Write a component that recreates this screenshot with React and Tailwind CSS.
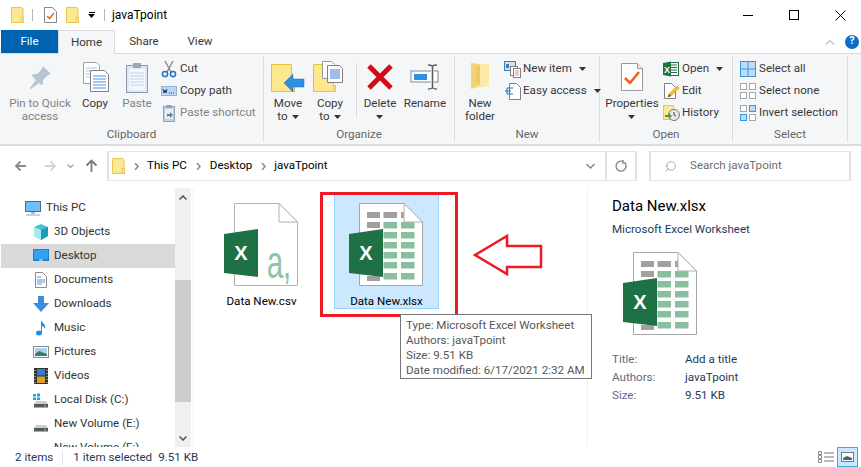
import { Search } from "lucide-react";

const Svg = ({ w = 16, h = 16, children, className = "" }) => (
  <svg width={w} height={h} viewBox={`0 0 ${w} ${h}`} className={`block shrink-0 ${className}`}>
    {children}
  </svg>
);

const Caret = ({ alone }) => (
  <svg width="7" height="4" viewBox="0 0 7 4" className={`inline-block align-middle ${alone ? "" : "ml-1"}`}>
    <path d="M0 0h7L3.5 4z" fill="#333" />
  </svg>
);

/* ---------- small folder used in title bar + address bar ---------- */
const SmallFolder = () => (
  <Svg w={13} h={16}>
    <path d="M.5.5h10l1.500 1v14H.5z" fill="#fce890" stroke="#eac54f" />
    <path d="M10 10.500h2.500v5H10z" fill="#fce890" stroke="#eac54f" />
  </Svg>
);

/* ---------- ribbon icons ---------- */
const PinIcon = () => (
  <Svg w={32} h={32}>
    <path d="M19 5l8 8-3 1-5 5 0 4-2 1-9-9 1-2 4 0 5-5z" fill="#b8c4d4" />
    <path d="M12 19l-6 8 1 1 8-6z" fill="#b8c4d4" />
  </Svg>
);

const CopyIcon = () => (
  <Svg w={32} h={32}>
    <path d="M4.500 1.500h13l3 3v18h-16z" fill="#fff" stroke="#a0a0a0" />
    <path d="M7 7h11M7 10h11M7 13h11M7 16h11" stroke="#a9c3e8" />
    <path d="M11.500 9.500h14l4 4v17h-18z" fill="#fff" stroke="#808080" />
    <path d="M14 15h13M14 18h13M14 21h13M14 24h13M14 27h13" stroke="#4f8fe6" />
  </Svg>
);

const PasteIcon = () => (
  <Svg w={32} h={32}>
    <rect x="5.500" y="4.500" width="21" height="27" fill="#dfe8f3" stroke="#8a99ab" />
    <rect x="8" y="8" width="16" height="21" fill="#f4f7fb" />
    <path d="M9 12h14M9 15h14M9 18h14M9 21h14M9 24h14" stroke="#bfd2ea" />
    <rect x="12" y="2" width="8" height="5" fill="#9aa7b8" />
  </Svg>
);

const CutIcon = () => (
  <Svg w={16} h={18}>
    <path d="M4 1l6 11M12 1L6 12" stroke="#8a8f96" strokeWidth="1.500" />
    <circle cx="4" cy="14" r="2.600" fill="none" stroke="#1f74c9" strokeWidth="1.500" />
    <circle cx="12" cy="14" r="2.600" fill="none" stroke="#1f74c9" strokeWidth="1.500" />
  </Svg>
);

const CopyPathIcon = () => (
  <Svg w={16} h={16}>
    <rect x=".5" y="3.500" width="15" height="9" fill="#b8d8f4" stroke="#8fb4d6" />
    <path d="M2 6l1 4 1-3 1 3 1-4" stroke="#24405e" fill="none" />
    <path d="M8 10h1M10 10h1M12 10h1" stroke="#24405e" />
  </Svg>
);

const ShortcutIcon = () => (
  <Svg w={16} h={18}>
    <rect x="2.500" y="2.500" width="11" height="15" fill="#bcd0e6" stroke="#8fa2b6" />
    <rect x="4" y="5" width="8" height="10" fill="#e6eef6" />
    <path d="M6 13v-3h3V8l3 3-3 3v-2H7z" fill="#6b7d92" />
    <rect x="5.500" y="1" width="5" height="3" fill="#8fa2b6" />
  </Svg>
);

const MoveToIcon = () => (
  <Svg w={36} h={32}>
    <path d="M1.500 3.500h20v27h-20z" fill="#fde88e" stroke="#e9bf3e" />
    <path d="M21.500 24.500h3v6h-3" fill="#fde88e" stroke="#e9bf3e" />
    <path d="M14 22l9-9v5h11v8H23v5z" fill="#2f8fe0" stroke="#1b6db5" strokeWidth=".5" />
  </Svg>
);

const CopyToIcon = () => (
  <Svg w={36} h={32}>
    <path d="M1.500 3.500h20v27h-20z" fill="#fde88e" stroke="#e9bf3e" />
    <path d="M21.500 24.500h2v6h-2" fill="#fde88e" stroke="#e9bf3e" />
    <path d="M10.500.5h9l3 3v14h-12z" fill="#fff" stroke="#999" />
    <path d="M15.500 4.500h12l3 3v14h-15z" fill="#fff" stroke="#808080" />
    <path d="M18 9h10M18 11h10M18 13h10M18 15h10M18 17h10" stroke="#3f7fd4" />
  </Svg>
);

const DeleteIcon = () => (
  <Svg w={28} h={28}>
    <path d="M3 3l22 22M25 3L3 25" stroke="#d40a14" strokeWidth="5" />
  </Svg>
);

const RenameIcon = () => (
  <Svg w={30} h={28}>
    <rect x="1" y="8" width="27" height="11" fill="#fff" stroke="#7f8a96" />
    <rect x="4" y="11" width="13" height="6" fill="#2f8fe0" />
    <rect x="21" y="7" width="3" height="14" fill="#f5f6f7" />
    <path d="M18 2c2 0 3 0 4.500 1C24 2 25 2 27 2M22.500 3v22M18 26c2 0 3 0 4.500-1 1.500 1 2.500 1 4.500 1" stroke="#5c5c5c" strokeWidth="1.500" fill="none" />
  </Svg>
);

const NewFolderIcon = () => (
  <Svg w={20} h={30}>
    <path d="M1 1l10 1 8 0 0 22-10 1-8 2z" fill="#f8dd83" />
    <path d="M10 2h9v22H10z" fill="#fbe9a6" />
    <path d="M1 1l9 2v19l-9 5z" fill="#f4d274" />
    <path d="M6 4h4v18H6z" fill="#efc961" />
  </Svg>
);

const NewItemIcon = () => (
  <Svg w={17} h={17}>
    <rect x=".5" y=".5" width="11" height="9" fill="#cfe2f3" stroke="#3f7fb5" />
    <rect x="2" y="3" width="3" height="4" fill="#3f7fb5" />
    <rect x="6.500" y="5.500" width="7" height="9" fill="#fff" stroke="#808080" />
    <rect x="9.500" y="7.500" width="7" height="9" fill="#fff" stroke="#808080" />
    <path d="M11 10h4M11 12h4M11 14h4" stroke="#e09a80" />
  </Svg>
);

const EasyAccessIcon = () => (
  <Svg w={17} h={17}>
    <path d="M5.500.5h7l4 4v12h-11z" fill="#fff" stroke="#808080" />
    <path d="M3 5h6M1 8h6M3 11h6" stroke="#1f74c9" strokeWidth="1.200" />
    <path d="M3 5v6" stroke="#1f74c9" />
  </Svg>
);

const PropertiesIcon = () => (
  <Svg w={24} h={30}>
    <path d="M1.500 1.500h16l5 5v22h-21z" fill="#fff" stroke="#9a9a9a" />
    <path d="M17.500 1.500v5h5" fill="#eee" stroke="#9a9a9a" />
    <path d="M5 16l5 5 9-11" fill="none" stroke="#e8601c" strokeWidth="2.500" />
  </Svg>
);

const ExcelSmall = () => (
  <Svg w={16} h={16}>
    <rect x="6.500" y="1.500" width="9" height="13" fill="#fff" stroke="#1e7145" />
    <path d="M8 4h6M8 6.500h6M8 9h6M8 11.500h6" stroke="#1e7145" />
    <path d="M0 2l8-1.500v15L0 14z" fill="#1e7145" />
    <text x="4" y="11.500" textAnchor="middle" fontSize="9" fontWeight="700" fill="#fff" fontFamily="Liberation Sans, sans-serif">X</text>
  </Svg>
);

const EditIcon = () => (
  <Svg w={16} h={16}>
    <path d="M1.500.5h7l4 4v11h-11z" fill="#fff" stroke="#808080" />
    <path d="M5 14l1-3 8-8 2 2-8 8z" fill="#f5c33b" stroke="#b88a1a" strokeWidth=".6" />
    <path d="M5 14l1-3 2 2z" fill="#555" />
  </Svg>
);

const HistoryIcon = () => (
  <Svg w={17} h={16}>
    <path d="M.5.5h10v14H.5z" fill="#fce890" stroke="#eac54f" />
    <circle cx="11" cy="10" r="5.500" fill="#e8e8e8" stroke="#777" />
    <path d="M11 7v3l2 1" stroke="#444" fill="none" />
    <path d="M2 10h4V8l3 3-3 3v-2H2z" fill="#3aa935" />
  </Svg>
);

const GridIcon = ({ cells }) => (
  <Svg w={16} h={16}>
    {[[0, 0], [9, 0], [0, 9], [9, 9]].map(([x, y], i) => (
      <rect
        key={i}
        x={x + 0.5}
        y={y + 0.5}
        width="6"
        height="6"
        fill={cells[i] ? "#bcdcf8" : "#fff"}
        stroke={cells[i] ? "#3a96dd" : "#a6a6a6"}
      />
    ))}
  </Svg>
);

const SelectAllIcon = () => (
  <Svg w={16} h={16}>
    <rect x=".5" y=".5" width="15" height="15" fill="#bcdcf8" stroke="#3a96dd" />
    <path d="M8 0v16M0 8h16" stroke="#3a96dd" />
  </Svg>
);

/* ---------- nav pane icons ---------- */
const PcIcon = () => (
  <Svg>
    <rect x=".5" y="1.500" width="15" height="10" fill="#6cc0f5" stroke="#4a6a86" />
    <path d="M6 12h4v2H6z" fill="#b5bcc4" />
    <path d="M1 15h14" stroke="#9aa4ae" />
  </Svg>
);
const CubeIcon = () => (
  <Svg>
    <path d="M8 0l7 3v9l-7 4-7-4V3z" fill="#3fc4d6" />
    <path d="M1 3l7 3v10l-7-4z" fill="#a7e7ee" />
    <path d="M8 6l7-3v9l-7 4z" fill="#1a9cb8" />
  </Svg>
);
const DesktopIcon = () => (
  <Svg>
    <rect x="0" y="1" width="16" height="12" fill="#1d7fd6" />
    <rect x="1" y="2" width="14" height="9" fill="#33a1f0" />
    <rect x="6" y="11.500" width="4" height="1" fill="#e6f2fc" />
  </Svg>
);
const DocumentsIcon = () => (
  <Svg>
    <path d="M2.500.5h7l4 4v11h-11z" fill="#fff" stroke="#8a8a8a" />
    <path d="M4 5h4M4 8h8M4 10h8M4 12h5" stroke="#5a93d0" />
  </Svg>
);
const DownloadsIcon = () => (
  <Svg>
    <path d="M5 0h6v7h5l-8 9-8-9h5z" fill="#3a8fdd" />
  </Svg>
);
const MusicIcon = () => (
  <Svg>
    <ellipse cx="6" cy="13" rx="3" ry="2.500" fill="#1d8ee8" />
    <path d="M8 13V0c1 3 5 4 4 9-1-2-2-3-3-3v7z" fill="#1d8ee8" />
  </Svg>
);
const PicturesIcon = () => (
  <Svg>
    <rect x=".5" y="2.500" width="15" height="11" fill="#fff" stroke="#8a8a8a" />
    <rect x="2" y="4" width="12" height="8" fill="#a9d4ef" />
    <path d="M2 10l4-3 8 3v2H2z" fill="#3f7a6a" />
  </Svg>
);
const VideosIcon = () => (
  <Svg>
    <rect x="1" y="0" width="14" height="16" fill="#333" />
    <rect x="4" y="1" width="8" height="6.500" fill="#2f7fd0" />
    <rect x="4" y="8.500" width="8" height="6.500" fill="#d8a030" />
    <path d="M2 2v1M2 5v1M2 8v1M2 11v1M2 14v1M14 2v1M14 5v1M14 8v1M14 11v1M14 14v1" stroke="#ddd" />
  </Svg>
);
const DriveBody = () => (
  <>
    <path d="M3 9h10l2 3H1z" fill="#c9ccd0" />
    <rect x="1" y="12" width="14" height="3.500" fill="#55595e" />
    <rect x="11" y="13" width="2" height="1.500" fill="#43d04a" />
  </>
);
const LocalDiskIcon = () => (
  <Svg>
    <DriveBody />
    <path d="M0 2h3v2.500H0zM4 1.500h3V4.500H4zM0 5.500h3V8H0zM4 5.500h3V8H4z" fill="#19a0f0" />
  </Svg>
);
const VolumeIcon = () => (
  <Svg>
    <DriveBody />
  </Svg>
);

/* ---------- big excel file thumbnails ---------- */
const ExcelFile = ({ csv }) => {
  const cols = [34.5, 52];
  const rows = [19, 29, 39, 49, 59, 70];
  return (
    <svg width="74" height="83" viewBox="0 0 74 83" className="block">
      <path d="M10.500.5H55L73.500 19v63.500h-63z" fill="#fff" stroke={csv ? "#b3b3b3" : "#a6a6a6"} />
      {!csv && (
        <>
          <rect x="18" y="9" width="13" height="6" fill="#a0a0a0" />
          <rect x="34.500" y="9" width="13.500" height="6" fill="#a0a0a0" />
          <rect x="52" y="9" width="3" height="6" fill="#a0a0a0" />
          <rect x="18" y="19" width="13" height="6" fill="#a0a0a0" />
          <rect x="18" y="73" width="13" height="5" fill="#a0a0a0" />
          {cols.map((x) =>
            rows.map((y) => <rect key={`${x}-${y}`} x={x} y={y} width="13.500" height="6.500" fill="#88bf9f" />)
          )}
        </>
      )}
      <path d="M55 .5V19h18.500z" fill="#fff" stroke="#b3b3b3" />
      <path d="M0 31l34-5v48l-34-4z" fill="#1e7145" />
      <text x="17" y="57" textAnchor="middle" fontSize="20" fontWeight="700" fill="#fff" fontFamily="Liberation Sans, sans-serif">X</text>
      {csv && (
        <text transform="translate(43,75) scale(.63,1)" fontSize="46" fill="#8cc3a3" fontFamily="Liberation Sans, sans-serif">a,</text>
      )}
    </svg>
  );
};

/* ---------- ribbon pieces ---------- */
function Group({ w, label, className = "", children }) {
  return (
    <div style={{ width: w }} className="h-[86px] border-r border-[#dcdddf] flex flex-col shrink-0 mt-[2px]">
      <div className={`h-[70px] mt-[2px] flex items-start ${className}`}>{children}</div>
      <div className="text-center text-[#666] leading-[16px]">{label}</div>
    </div>
  );
}

function LargeBtn({ w, icon, lines, caret, disabled }) {
  return (
    <div style={{ width: w }} className={`flex flex-col items-center shrink-0 ${disabled ? "text-[#838383]" : "text-[#383838]"}`}>
      <div className="h-[39px] pb-[2px] flex items-center justify-center">{icon}</div>
      <div className="leading-[13px] text-center whitespace-nowrap">
        {lines.map((l, i) => (
          <div key={i} className="h-[13px]">
            {l}
            {caret && i === lines.length - 1 && <Caret alone={!l} />}
          </div>
        ))}
      </div>
    </div>
  );
}

function SmallBtn({ icon, label, caret, disabled }) {
  return (
    <div className={`h-[22px] flex items-center gap-[3px] whitespace-nowrap ${disabled ? "text-[#838383]" : "text-[#383838]"}`}>
      <div className="w-[16px] flex justify-center">{icon}</div>
      <span>{label}</span>
      {caret && <Caret />}
    </div>
  );
}

const navItems = [
  { label: "This PC", Icon: PcIcon, top: true },
  { label: "3D Objects", Icon: CubeIcon },
  { label: "Desktop", Icon: DesktopIcon, active: true },
  { label: "Documents", Icon: DocumentsIcon },
  { label: "Downloads", Icon: DownloadsIcon },
  { label: "Music", Icon: MusicIcon },
  { label: "Pictures", Icon: PicturesIcon },
  { label: "Videos", Icon: VideosIcon },
  { label: "Local Disk (C:)", Icon: LocalDiskIcon },
  { label: "New Volume (E:)", Icon: VolumeIcon },
  { label: "New Volume (F:)", Icon: VolumeIcon },
];

const Crumb = () => (
  <svg width="5" height="7" viewBox="0 0 5 7" className="shrink-0">
    <path d="M1 0l3 3.500L1 7" fill="none" stroke="#8a8a8a" strokeWidth="1.500" />
  </svg>
);

export default function App() {
  return (
    <div
      className="relative w-[861px] h-[467px] overflow-hidden bg-white flex flex-col text-[11.6px] text-[#333]"
      style={{ fontFamily: 'Roboto, "Liberation Sans", sans-serif' }}
    >
      {/* TITLE BAR */}
      <div className="h-[30px] flex items-center shrink-0">
        <div className="ml-[11px]"><SmallFolder /></div>
        <div className="ml-[8px] w-px h-[12px] bg-[#b5b5b5]" />
        <div className="ml-[11px]">
          <Svg w={13} h={16}>
            <path d="M.5.5h8l4 4v11H.5z" fill="#fff" stroke="#888" />
            <path d="M3 9l2.500 2.500L10 6" fill="none" stroke="#e8601c" strokeWidth="1.500" />
          </Svg>
        </div>
        <div className="ml-[9px]"><SmallFolder /></div>
        <div className="ml-[9px] flex flex-col items-center gap-[1px]">
          <div className="w-[6px] h-px bg-black" />
          <svg width="7" height="4" viewBox="0 0 7 4"><path d="M0 0h7L3.500 4z" fill="#000" /></svg>
        </div>
        <div className="ml-[9px] w-px h-[12px] bg-[#b5b5b5]" />
        <div className="ml-[7px] text-black text-[12px]">javaTpoint</div>
        <div className="ml-auto flex items-center">
          <div className="w-[46px] flex justify-center"><div className="w-[10px] h-px bg-black" /></div>
          <div className="w-[46px] flex justify-center"><div className="w-[10px] h-[10px] border border-black" /></div>
          <div className="w-[44px] flex justify-center pl-[3px]">
            <svg width="11" height="11" viewBox="0 0 11 11"><path d="M.5.5l10 10M10.500.5l-10 10" stroke="#000" /></svg>
          </div>
        </div>
      </div>

      {/* TABS */}
      <div className="h-[24px] flex items-stretch shrink-0 border-b border-[#dadbdc] pl-px">
        <div className="w-[57px] h-[23px] bg-[#0063b1] text-white flex items-center justify-center">File</div>
        <div className="w-[57px] h-[24px] bg-[#f5f6f7] border border-b-0 border-[#dadbdc] flex items-center justify-center text-[#383838]">Home</div>
        <div className="w-[58px] flex items-center justify-center text-[#383838]">Share</div>
        <div className="w-[54px] flex items-center justify-center text-[#383838]">View</div>
        <div className="ml-auto flex items-center gap-[10px] pr-[2px]">
          <svg width="10" height="6" viewBox="0 0 10 6"><path d="M1 5.500l4-4 4 4" fill="none" stroke="#c2c2c2" strokeWidth="1.200" /></svg>
          <div className="w-[14px] h-[14px] rounded-full bg-[#0a6cc4] text-white text-[11px] font-bold flex items-center justify-center">?</div>
        </div>
      </div>

      {/* RIBBON */}
      <div className="h-[92px] bg-[#f5f6f7] border-b-2 border-[#dadbdc] flex shrink-0">
        <Group w={264} label="Clipboard" className="pl-[5px]">
          <LargeBtn w={70} icon={<PinIcon />} lines={["Pin to Quick", "access"]} disabled />
          <LargeBtn w={40} icon={<CopyIcon />} lines={["Copy"]} />
          <LargeBtn w={44} icon={<PasteIcon />} lines={["Paste"]} disabled />
          <div className="ml-[2px]">
            <SmallBtn icon={<CutIcon />} label="Cut" />
            <SmallBtn icon={<CopyPathIcon />} label="Copy path" />
            <SmallBtn icon={<ShortcutIcon />} label="Paste shortcut" disabled />
          </div>
        </Group>
        <Group w={191} label="Organize" className="pl-[4px]">
          <LargeBtn w={40} icon={<MoveToIcon />} lines={["Move", "to"]} caret />
          <LargeBtn w={44} icon={<CopyToIcon />} lines={["Copy", "to"]} caret />
          <div className="w-px h-[55px] bg-[#dcdddf] mt-[5px] ml-[4px]" />
          <LargeBtn w={46} icon={<DeleteIcon />} lines={["Delete", ""]} caret />
          <LargeBtn w={44} icon={<RenameIcon />} lines={["Rename"]} />
        </Group>
        <Group w={145} label="New" className="pl-[5px]">
          <LargeBtn w={40} icon={<NewFolderIcon />} lines={["New", "folder"]} />
          <div className="ml-[4px]">
            <SmallBtn icon={<NewItemIcon />} label="New item" caret />
            <SmallBtn icon={<EasyAccessIcon />} label="Easy access" caret />
          </div>
        </Group>
        <Group w={133} label="Open" className="pl-[5px]">
          <LargeBtn w={54} icon={<PropertiesIcon />} lines={["Properties", ""]} caret />
          <div className="ml-[4px]">
            <SmallBtn icon={<ExcelSmall />} label="Open" caret />
            <SmallBtn icon={<EditIcon />} label="Edit" />
            <SmallBtn icon={<HistoryIcon />} label="History" />
          </div>
        </Group>
        <Group w={115} label="Select" className="pl-[7px]">
          <div>
            <SmallBtn icon={<SelectAllIcon />} label="Select all" />
            <SmallBtn icon={<GridIcon cells={[0, 0, 0, 0]} />} label="Select none" />
            <SmallBtn icon={<GridIcon cells={[0, 1, 1, 0]} />} label="Invert selection" />
          </div>
        </Group>
      </div>

      {/* ADDRESS BAR */}
      <div className="h-[42px] flex items-start pt-[5px] shrink-0">
        <div className="w-[107px] h-[29px] flex items-center pl-[14px]">
          <svg width="13" height="12" viewBox="0 0 13 12"><path d="M12 6H2M6.500 1.500L2 6l4.500 4.500" fill="none" stroke="#8a8a8a" strokeWidth="1.800" /></svg>
          <svg width="13" height="12" viewBox="0 0 13 12" className="ml-[17px]"><path d="M1 6h10M6.500 1.500L11 6l-4.500 4.500" fill="none" stroke="#d4d4d4" strokeWidth="1.800" /></svg>
          <svg width="7" height="4" viewBox="0 0 7 4" className="ml-[10px]"><path d="M.5.5l3 3 3-3" fill="none" stroke="#a0a0a0" strokeWidth="1.200" /></svg>
          <svg width="13" height="13" viewBox="0 0 13 13" className="ml-[11px]"><path d="M6.500 13V2M1.500 6.500l5-5 5 5" fill="none" stroke="#7a7a7a" strokeWidth="1.800" /></svg>
        </div>
        <div className="w-[530px] h-[30px] border-2 border-[#e3e3e3] border-y-[1.500px] flex items-center text-black">
          <div className="ml-[3px]"><SmallFolder /></div>
          <div className="ml-[9px]"><Crumb /></div>
          <span className="ml-[8px]">This PC</span>
          <div className="ml-[9px]"><Crumb /></div>
          <span className="ml-[9px]">Desktop</span>
          <div className="ml-[9px]"><Crumb /></div>
          <span className="ml-[8px]">javaTpoint</span>
          <div className="ml-auto w-[29px] h-full flex items-center justify-center">
            <svg width="9" height="6" viewBox="0 0 9 6"><path d="M.5 1l4 4 4-4" fill="none" stroke="#8a8a8a" strokeWidth="1.500" /></svg>
          </div>
          <div className="w-[30px] h-full border-l-2 border-[#e3e3e3] flex items-center justify-center">
            <svg width="12" height="12" viewBox="0 0 12 12"><path d="M10 3a5 5 0 1 1-2-1.500M8 0v3h3" fill="none" stroke="#8a8a8a" strokeWidth="1.400" /></svg>
          </div>
        </div>
        <div className="ml-[12px] w-[202px] h-[30px] border-2 border-[#e3e3e3] border-y-[1.500px] flex items-center text-[#6d6d6d]">
          <Search size={13} strokeWidth={1} className="ml-[13px] -scale-x-100" />
          <span className="ml-[13px]">Search javaTpoint</span>
        </div>
      </div>

      {/* MAIN */}
      <div className="flex-1 min-h-0 flex">
        {/* nav pane */}
        <div className="w-[175px] pt-[8px] overflow-hidden shrink-0 pl-px">
          {navItems.map(({ label, Icon, top, active }) => (
            <div
              key={label}
              className={`h-[24px] flex items-center gap-[5px] whitespace-nowrap ${top ? "pl-[24px]" : "pl-[32px]"} ${active ? "bg-[#d9d9d9]" : ""}`}
            >
              <Icon />
              <span>{label}</span>
            </div>
          ))}
        </div>

        {/* scrollbar */}
        <div className="w-[16px] bg-[#f0f0f0] flex flex-col items-center shrink-0">
          <div className="h-[18px] flex items-center justify-center">
            <svg width="8" height="5" viewBox="0 0 8 5"><path d="M.5 4.500L4 1l3.500 3.500" fill="none" stroke="#505050" strokeWidth="1.500" /></svg>
          </div>
          <div className="h-[74px]" />
          <div className="w-full h-[122px] bg-[#cdcdcd]" />
          <div className="flex-1" />
          <div className="h-[18px] flex items-center justify-center">
            <svg width="8" height="5" viewBox="0 0 8 5"><path d="M.5.5L4 4l3.500-3.500" fill="none" stroke="#505050" strokeWidth="1.500" /></svg>
          </div>
        </div>

        {/* file list */}
        <div className="ml-[2px] w-[394px] border-l border-[#f2f2f2] pl-[15px] pt-[6px] flex gap-[20px] shrink-0">
          {[
            { name: "Data New.csv", csv: true },
            { name: "Data New.xlsx", selected: true },
          ].map((f) => (
            <div
              key={f.name}
              className={`w-[105px] h-[115px] border pt-[8px] pl-[14px] ${f.selected ? "bg-[#cce8ff] border-[#99d1ff]" : "border-transparent"}`}
            >
              <ExcelFile csv={f.csv} />
              <div className="-ml-[14px] mt-[7px] text-center text-black leading-[16px]">{f.name}</div>
            </div>
          ))}
        </div>

        {/* preview pane */}
        <div className="flex-1 border-l border-[#f2f2f2] pl-[24px]">
          <div className="text-[15px] leading-[20px] text-black mt-[8px]">Data New.xlsx</div>
          <div className="mt-[5px] leading-[16px] text-[#1e395b]">Microsoft Excel Worksheet</div>
          <div className="ml-[11px] mt-[15px]"><ExcelFile /></div>
          <div className="mt-[15px] leading-[18px]">
            {[
              ["Title:", "Add a title"],
              ["Authors:", "javaTpoint"],
              ["Size:", "9.51 KB"],
            ].map(([k, v]) => (
              <div key={k} className="flex">
                <span className="w-[73px] text-[#5f6b7a]">{k}</span>
                <span className="text-[#1e395b]">{v}</span>
              </div>
            ))}
          </div>
        </div>
      </div>

      {/* STATUS BAR */}
      <div className="h-[20px] flex items-center shrink-0 text-[#1e395b] bg-white relative pt-[2px]">
        <span className="ml-[15px]">2 items</span>
        <div className="ml-[9px] w-px h-[14px] bg-[#e3e3e3]" />
        <span className="ml-[10px]">1 item selected</span>
        <span className="ml-[6px]">9.51 KB</span>
        <div className="ml-auto mr-[3px] flex items-center h-full -mt-[2px]">
          <svg width="16" height="12" viewBox="0 0 16 12" className="mr-[3px]">
            <path d="M.5.5h3v3h-3zM.5 4.500h3v3h-3zM.5 8.500h3v3h-3z" fill="#fff" stroke="#8a8a8a" />
            <path d="M6 2h10M6 6h10M6 10h10" stroke="#777" />
          </svg>
          <div className="w-[21px] h-[20px] bg-[#cce8ff] border border-[#3fa9e8] flex items-center justify-center">
            <svg width="13" height="10" viewBox="0 0 13 10">
              <rect x=".5" y=".5" width="12" height="9" fill="#fff" stroke="#777" />
              <path d="M2 6l4-2 5 2v2H2z" fill="#3f6a7a" />
            </svg>
          </div>
        </div>
      </div>

      {/* red annotation + tooltip, sit over the file list */}
      <div className="absolute left-[320px] top-[192px] w-[138px] h-[125px] border-[3px] border-[#ed1c24]" />
      <svg width="72" height="44" viewBox="0 0 72 44" className="absolute left-[472px] top-[233px]">
        <path d="M3 22L35 3v10h34v21H35v7z" fill="none" stroke="#ed1c24" strokeWidth="2.500" />
      </svg>
      <div className="absolute left-[400px] top-[314px] w-[192px] h-[65px] bg-white border border-[#767676] pl-[5px] pt-[3px] text-[#575757] leading-[15px] whitespace-nowrap">
        <div>Type: Microsoft Excel Worksheet</div>
        <div>Authors: javaTpoint</div>
        <div>Size: 9.51 KB</div>
        <div>Date modified: 6/17/2021 2:32 AM</div>
      </div>
    </div>
  );
}
